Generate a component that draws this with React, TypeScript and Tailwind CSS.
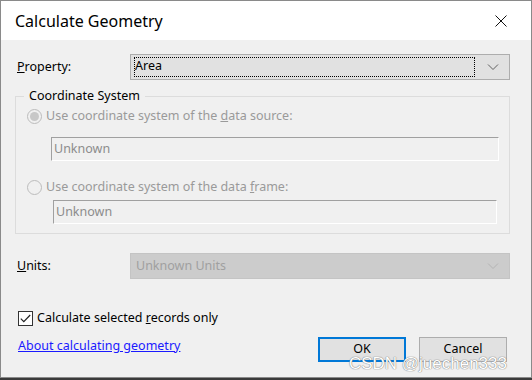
import { ReactNode } from 'react';

const font = { fontFamily: '"Noto Sans", "Open Sans", Arial, sans-serif' };

function Chevron({ light }: { light?: boolean }) {
  return (
    <svg width="12" height="8" viewBox="0 0 12 8" className="shrink-0">
      <path d="M1 1.5 L6 6.5 L11 1.5" fill="none" stroke={light ? '#b4b4b4' : '#606060'} strokeWidth="1" />
    </svg>
  );
}

function Radio({ checked, children }: { checked?: boolean; children: ReactNode }) {
  return (
    <div className="flex items-center h-[18px]">
      <span className="w-[15px] h-[15px] rounded-full border border-[#bcbcbc] bg-[#f0f0f0] flex items-center justify-center">
        {checked && <span className="w-[9px] h-[9px] rounded-full bg-[#c8c8c8]" />}
      </span>
      <span className="ml-[4px] text-[#9a9a9a]">{children}</span>
    </div>
  );
}

function ReadOnlyBox({ text }: { text: string }) {
  return (
    <div className="h-[24px] border border-[#e8e8e8] border-t-[#a0a0a0] border-l-[#a0a0a0] border-r-white border-b-white bg-[#f0f0f0] flex items-center pl-[2px] text-[#8c8c8c]">
      {text}
    </div>
  );
}

export default function App() {
  return (
    <div className="w-[532px] h-[380px] bg-[#3a3a3a] text-[12.5px] text-black" style={font}>
      <div className="w-[532px] h-[378px] border border-[#8a8a8a] bg-[#f0f0f0] flex flex-col">
        {/* title bar */}
        <div className="h-[39px] bg-white flex items-center justify-between pl-[14px] pr-[24px] shrink-0">
          <span className="text-[16px] text-black">Calculate Geometry</span>
          <svg width="12" height="12" viewBox="0 0 12 12">
            <path d="M0.5 0.5 L11.5 11.5 M11.5 0.5 L0.5 11.5" stroke="#111" strokeWidth="1" />
          </svg>
        </div>

        <div className="flex-1 flex flex-col pl-[14px] pr-[21px] pt-[14px]">
          {/* property row */}
          <div className="flex items-center h-[26px]">
            <span className="w-[115px] pl-[2px]"><u>P</u>roperty:</span>
            <div className="flex-1 h-[26px] border border-[#adadad] bg-[#e1e1e1] flex items-center pl-[3px] pr-[10px]">
              <div className="flex-1 h-[20px] border border-dotted border-black flex items-center mr-[12px]">
                <span className="-mt-[1px]">Area</span>
              </div>
              <Chevron />
            </div>
          </div>

          {/* group box */}
          <div className="relative mt-[16px] h-[138px] border border-[#dcdcdc] pt-[10px] pl-[11px] pr-[10px]">
            <span className="absolute -top-[10px] left-[8px] bg-[#f0f0f0] px-[5px] text-black">Coordinate System</span>
            <Radio checked>
              Use coordinate system of the <u>d</u>ata source:
            </Radio>
            <div className="ml-[24px] mt-[12px]">
              <ReadOnlyBox text="Unknown" />
            </div>
            <div className="mt-[17px]">
              <Radio>
                Use coordinate system of the data <u>f</u>rame:
              </Radio>
            </div>
            <div className="ml-[26px] mr-[2px] mt-[4px]">
              <ReadOnlyBox text="Unknown" />
            </div>
          </div>

          {/* units row */}
          <div className="flex items-center h-[26px] mt-[19px]">
            <span className="w-[115px] pl-[2px]"><u>U</u>nits:</span>
            <div className="flex-1 h-[26px] border border-[#c4c4c4] bg-[#cccccc] flex items-center pl-[5px] pr-[10px] text-[#a0a0a0]">
              <span className="flex-1">Unknown Units</span>
              <Chevron light />
            </div>
          </div>

          {/* checkbox */}
          <div className="flex items-center mt-[31px] pl-[3px] h-[16px]">
            <span className="w-[15px] h-[15px] border border-[#333] bg-white flex items-center justify-center">
              <svg width="11" height="9" viewBox="0 0 11 9">
                <path d="M0.8 4.6 L3.8 7.6 L10.2 1" fill="none" stroke="#222" strokeWidth="1.2" />
              </svg>
            </span>
            <span className="ml-[4px]">Calculate selected <u>r</u>ecords only</span>
          </div>

          {/* bottom row */}
          <div className="flex items-start mt-[10px] pl-[3px]">
            <span className="text-[#1a1aff] underline mt-[1px]">About calculating geometry</span>
            <div className="ml-auto flex gap-[13px] mr-[3px] mt-[1px] relative">
              <button className="w-[88px] h-[25px] border-2 border-[#0078d7] bg-[#e1e1e1] text-black">OK</button>
              <button className="w-[88px] h-[25px] border border-[#adadad] bg-[#e1e1e1] text-black">Cancel</button>
              <span
                className="absolute right-[0px] top-[17px] text-[17px] leading-[20px] text-white whitespace-nowrap"
                style={{ fontFamily: 'Arial, "Liberation Sans", sans-serif', textShadow: '0 0 1px #777, 0 0 1px #777' }}
              >
                CSDN @juechen333
              </span>
            </div>
          </div>
        </div>
      </div>
    </div>
  );
}
